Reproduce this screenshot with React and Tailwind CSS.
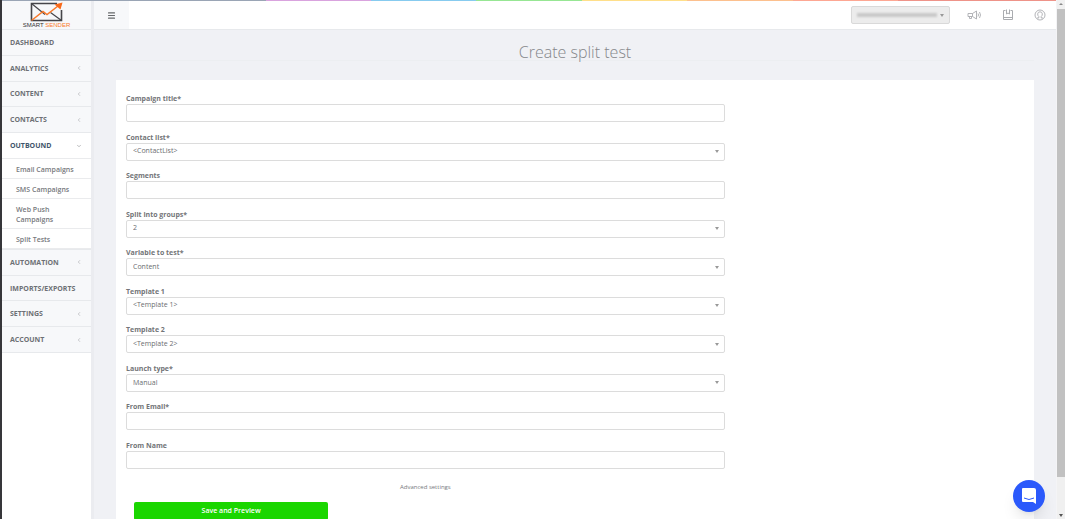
import { ChevronLeft, ChevronDown, Menu } from 'lucide-react'

const stripes = [
  'bg-[#9aa5b5] grow-5',
  'bg-[#d9a3de] grow-2',
  'bg-[#87cbef] grow-2',
  'bg-[#97e694] grow-2',
  'bg-[#ffdf8a] grow-2',
  'bg-[#fcc08e] grow-2',
  'bg-[#fda793] grow-2',
  'bg-[#ee9389] grow-3',
]

const subItems = ['Email Campaigns', 'SMS Campaigns', 'Web Push Campaigns', 'Split Tests']

const navItems = [
  { label: 'DASHBOARD' },
  { label: 'ANALYTICS', arrow: true },
  { label: 'CONTENT', arrow: true },
  { label: 'CONTACTS', arrow: true },
  { label: 'OUTBOUND', arrow: true, children: subItems },
  { label: 'AUTOMATION', arrow: true },
  { label: 'IMPORTS/EXPORTS' },
  { label: 'SETTINGS', arrow: true },
  { label: 'ACCOUNT', arrow: true },
]

const fields = [
  { id: 'title', label: 'Campaign title*' },
  { id: 'list', label: 'Contact list*', value: '<ContactList>' },
  { id: 'segments', label: 'Segments' },
  { id: 'groups', label: 'Split into groups*', value: '2' },
  { id: 'variable', label: 'Variable to test*', value: 'Content' },
  { id: 'template1', label: 'Template 1', value: '<Template 1>' },
  { id: 'template2', label: 'Template 2', value: '<Template 2>' },
  { id: 'launch', label: 'Launch type*', value: 'Manual' },
  { id: 'email', label: 'From Email*' },
  { id: 'name', label: 'From Name' },
]

function Logo() {
  return (
    <a href="#" className="flex h-full flex-col items-center pt-px">
      <svg width="33" height="20" viewBox="0 0 33 20" fill="none">
        <path d="M27 1.5H1.5V18.5H31.5V8" stroke="#454549" strokeWidth="1.6" />
        <path d="M1.5 1.5L15 12.5M20.5 10.5L31.5 18.5" stroke="#454549" strokeWidth="1.2" />
        <path d="M1.5 18.5L13 9.5L17 12.5L28 4" stroke="#f9792a" strokeWidth="1.5" />
        <path d="M32.5 0.5L24.5 2.5L30.5 7.5z" fill="#f96a1a" />
      </svg>
      <span className="font-['Liberation_Sans'] text-[6px] leading-[6px] whitespace-nowrap text-[#333]">
        SMART <span className="text-[#f9792a]">SENDER</span>
      </span>
    </a>
  )
}

function NavItem({ item }) {
  const open = Boolean(item.children)
  return (
    <li className="flex grow flex-col">
      <a
        href="#"
        className={
          open
            ? 'flex min-h-[25px] grow items-center justify-between border-b border-[#eaebed] bg-white pr-[9px] pl-2 text-[#3f556b]'
            : 'flex min-h-[25px] grow items-center justify-between border-b border-[#e7e9ec] bg-[#f7f8fa] pr-[9px] pl-2 text-[#6d7075]'
        }
      >
        <span className="pt-px text-[7px] leading-[10px] font-bold">{item.label}</span>
        {item.arrow && (open ? <ChevronDown size={6} className="text-[#77797d]" /> : <ChevronLeft size={6} className="text-[#96989c]" />)}
      </a>
      {open && (
        <ul className="border-b border-[#e7e9ec] bg-white">
          {item.children.map((child) => (
            <li key={child} className="border-b border-[#eaebed]">
              <a href="#" className="block pt-[6px] pr-4 pb-[3px] pl-[14px] text-[7px] leading-[10px] font-semibold text-[#77797d]">
                {child}
              </a>
            </li>
          ))}
        </ul>
      )}
    </li>
  )
}

function Caret() {
  return (
    <svg width="4" height="3" viewBox="0 0 4 3" fill="#999">
      <path d="M0 0h4L2 3z" />
    </svg>
  )
}

function Field({ field }) {
  const box = 'block h-[18px] w-full appearance-none rounded-xs border border-[#dcdcdc] bg-white px-1.5 text-[7px] text-[#6b6d70]'
  return (
    <div className="flex flex-col">
      <label htmlFor={field.id} className="text-[7px] leading-[10px] font-bold text-[#737578]">
        {field.label}
      </label>
      {field.value ? (
        <div className="relative">
          <select id={field.id} className={box}>
            <option>{field.value}</option>
          </select>
          <span className="pointer-events-none absolute inset-y-0 right-1.5 flex items-center">
            <Caret />
          </span>
        </div>
      ) : (
        <input id={field.id} type="text" className={box} />
      )}
    </div>
  )
}

function TopBar() {
  return (
    <header className="flex h-[29px] items-center border-b border-[#e7e9ec] bg-white pr-[10px]">
      <button type="button" aria-label="Toggle menu" className="flex h-full w-[35px] items-center justify-center bg-[#f7f8fa] text-[#66686b]">
        <Menu size={9} strokeWidth={3} />
      </button>
      <button
        type="button"
        aria-label="Account"
        className="ml-auto flex h-[18px] w-[99px] items-center justify-between rounded-xs border border-[#d9d9d9] bg-[#ececec] px-[5px]"
      >
        <span className="h-1 w-[80px] bg-[#c8c8c8] blur-[1px]" />
        <Caret />
      </button>
      <div className="ml-[17px] flex items-center gap-5 text-[#aaacb0]">
        <button type="button" aria-label="News">
          <svg width="15" height="12" viewBox="0 0 15 12" fill="none" stroke="currentColor" strokeWidth="0.9">
            <path d="M1 4.5H5.5V7.5H1zM5.5 4.5L9.5 2V10L5.5 7.5M2.5 7.5V9.5H4.5V7.5" />
            <path d="M11 4.5Q12 6 11 7.5M12.5 3Q14.5 6 12.5 9" />
          </svg>
        </button>
        <button type="button" aria-label="Docs">
          <svg width="12" height="12" viewBox="0 0 12 12" fill="none" stroke="currentColor">
            <path d="M3.5 1.5H1.5V10.5H10.5V1.5H8.5M1.5 8.5H10.5" />
            <path d="M4.5 0.5V5L6 4L7.5 5V0.5" />
          </svg>
        </button>
        <button type="button" aria-label="Profile">
          <svg width="12" height="12" viewBox="0 0 12 12" fill="none" stroke="currentColor" strokeWidth="0.9">
            <circle cx="6" cy="6" r="5" />
            <path d="M3 9H4.8V7.5Q3.5 6.5 3.7 4.8Q4 2.8 6 2.8T8.3 4.8Q8.5 6.5 7.2 7.5V9H9" />
          </svg>
        </button>
      </div>
    </header>
  )
}

function ScrollRail() {
  return (
    <div className="flex w-[9px] shrink-0 flex-col items-center border-l border-[#f4f4f6] bg-[#f0f0f0]">
      <svg width="6" height="9" viewBox="0 0 6 9" fill="#888">
        <path d="M1 5h4L3 3z" />
      </svg>
      <div className="w-full flex-1 bg-[#c1c1c1]" />
      <div className="flex h-[42px] items-end">
        <svg width="6" height="6" viewBox="0 0 6 6" fill="#555">
          <path d="M1 1h4L3 4z" />
        </svg>
      </div>
    </div>
  )
}

export default function App() {
  return (
    <div className="flex h-screen overflow-hidden border-l-2 border-[#36363a] bg-[#f0f1f5] font-['Open_Sans',sans-serif]">
      <div className="flex min-w-0 flex-1 flex-col">
        <div className="flex h-px shrink-0">
          {stripes.map((stripe) => (
            <div key={stripe} className={stripe} />
          ))}
        </div>
        <div className="flex min-h-0 flex-1">
          <aside className="w-[89px] shrink-0 bg-white">
            <div className="h-[29px] border-b border-[#e7e9ec] bg-[#f7f8fa]">
              <Logo />
            </div>
            <nav>
              <ul className="flex min-h-[323px] flex-col">
                {navItems.map((item) => (
                  <NavItem key={item.label} item={item} />
                ))}
              </ul>
            </nav>
          </aside>
          <div className="min-w-0 flex-1 border-l-3 border-[#ebecf0]">
            <TopBar />
            <main className="px-[22px]">
              <h1 className="mb-[19px] border-b border-[#eceef1] pt-[14px] text-center text-base leading-4 font-light text-[#85878b]">
                Create split test
              </h1>
              <form className="min-h-screen bg-white px-[10px] pt-[14px]">
                <div className="w-2/3">
                  <div className="flex min-h-[375px] flex-col justify-between">
                    {fields.map((field) => (
                      <Field key={field.id} field={field} />
                    ))}
                  </div>
                  <a href="#" className="mt-[13px] block text-center text-[6px] leading-[10px] text-[#77797d]">
                    Advanced settings
                  </a>
                  <div className="px-2 pt-[10px]">
                    <button type="submit" className="block h-[18px] w-1/3 rounded-xs bg-[#1ad600] text-[7px] font-semibold text-white">
                      Save and Preview
                    </button>
                  </div>
                </div>
              </form>
            </main>
          </div>
        </div>
      </div>
      <ScrollRail />
      <button
        type="button"
        aria-label="Open chat"
        className="fixed right-5 bottom-[7px] flex size-8 items-center justify-center rounded-full bg-[#2b59fb] shadow-lg"
      >
        <svg width="16" height="18" viewBox="0 0 16 18" fill="none">
          <path d="M2 1h11q2 0 2 2v14l-3 -2H2q-1 0 -1 -1V2q0 -1 1 -1z" fill="#fff" />
          <path d="M3 11q5 3 10 0" stroke="#2b59fb" />
        </svg>
      </button>
    </div>
  )
}
